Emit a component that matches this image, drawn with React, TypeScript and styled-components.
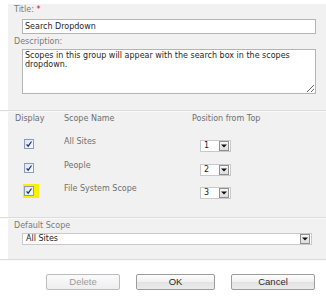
import { FC, Fragment } from "react";
import styled, { createGlobalStyle } from "styled-components";

const GlobalStyle = createGlobalStyle`
  html, body {
    margin: 0;
    padding: 0;
    background: #ffffff;
  }
  body {
    font-family: "DejaVu Sans", Verdana, sans-serif;
    font-size: 8px;
  }
`;

const Page = styled.div`
  width: 326px;
  height: 298px;
  padding-top: 4px;
  box-sizing: border-box;
  overflow: hidden;
`;

const Section = styled.div<{ $pt: number; $pb: number }>`
  margin-left: 8px;
  background: #f1f1f1;
  padding: ${(p) => p.$pt}px 10px ${(p) => p.$pb}px 6px;
  display: flex;
  flex-direction: column;
`;

const Divider = styled.div`
  height: 1px;
  background: #dcdcdc;
  border-bottom: 1px solid #fafafa;
`;

const Label = styled.div<{ $mt?: number }>`
  color: #7a7a7a;
  line-height: 10px;
  margin-top: ${(p) => p.$mt ?? 0}px;
`;

const Required = styled.span`
  color: #e0003a;
`;

const TextInput = styled.input`
  margin: 4px 0 0 8px;
  height: 15px;
  box-sizing: border-box;
  border: 1px solid #b5b5b5;
  background: #ffffff;
  padding: 0 2px;
  font-family: "DejaVu Sans", Verdana, sans-serif;
  font-size: 8px;
  color: #1f1f1f;
  outline: none;
`;

const TextArea = styled.textarea`
  margin: 2px 0 0 8px;
  height: 45px;
  box-sizing: border-box;
  border: 1px solid #b5b5b5;
  background: #ffffff;
  padding: 1px 2px;
  font-family: "DejaVu Sans", Verdana, sans-serif;
  font-size: 8px;
  line-height: 9px;
  color: #1f1f1f;
  outline: none;
  resize: both;
`;

const ScopeGrid = styled.div`
  display: grid;
  grid-template-columns: 49px 128px 1fr;
  grid-template-rows: 23px repeat(3, 23.5px);
  align-items: start;
  padding-left: 1px;
`;

const HeaderCell = styled.div`
  color: #6f6f6f;
  line-height: 10px;
`;

const ScopeName = styled.div`
  color: #6f6f6f;
  line-height: 10px;
`;

const CheckCell = styled.div`
  padding: 2px 0 0 9px;
`;

const CheckWrap = styled.span<{ $highlight?: boolean }>`
  display: inline-flex;
  padding: 2px 5px 2px 1px;
  margin: -2px 0 0 -1px;
  background: ${(p) => (p.$highlight ? "#f6f200" : "transparent")};
`;

const CheckBox = styled.span`
  width: 10px;
  height: 10px;
  box-sizing: border-box;
  border: 1px solid #8b9cb8;
  background: linear-gradient(135deg, #dfe6f2, #f8faff);
  display: inline-flex;
  align-items: center;
  justify-content: center;
`;

const SelectCell = styled.div`
  padding: 3px 0 0 8px;
`;

const SelectBox = styled.div<{ $width: number }>`
  width: ${(p) => p.$width}px;
  height: 12px;
  box-sizing: border-box;
  border: 1px solid #c9c9c9;
  background: #ffffff;
  display: flex;
  align-items: center;
  justify-content: space-between;
  padding: 0 1px 0 3px;
  color: #222222;
  line-height: 10px;
`;

const SelectArrow = styled.span`
  width: 10px;
  height: 10px;
  box-sizing: border-box;
  border: 1px solid #8f8f8f;
  background: linear-gradient(#f7f7f7, #dcdcdc);
  display: inline-flex;
  align-items: center;
  justify-content: center;
`;

const DefaultSelect = styled.div`
  margin: 2px 0 0 8px;
`;

const ButtonRow = styled.div`
  display: flex;
  justify-content: flex-end;
  gap: 16px;
  padding: 13px 11px 0 0;
`;

const Button = styled.button<{ $width: number }>`
  width: ${(p) => p.$width}px;
  height: 16px;
  box-sizing: border-box;
  border: 1px solid #9c9c9c;
  border-radius: 2px;
  background: linear-gradient(#fdfdfd 0%, #f0f0f0 50%, #e2e2e2 51%, #ebebeb 100%);
  font-family: "Liberation Sans", Arial, sans-serif;
  font-size: 9.5px;
  color: #2a2a2a;
  padding: 0;
  &:disabled {
    color: #9a9a9a;
    border-color: #bcbcbc;
    background: linear-gradient(#fbfbfb, #eeeeee);
  }
`;

const Arrow: FC = () => (
  <svg width="6" height="4" viewBox="0 0 6 4">
    <path d="M0 0.5 H6 L3 3.5 Z" fill="#111" />
  </svg>
);

const Check: FC = () => (
  <svg width="8" height="8" viewBox="0 0 8 8">
    <path
      d="M1.6 4.3 L3.2 6.2 L6.5 1.5"
      fill="none"
      stroke="#1b2d7a"
      strokeWidth="1.2"
    />
  </svg>
);

const Select: FC<{ value: string; width: number }> = ({ value, width }) => (
  <SelectBox $width={width}>
    <span>{value}</span>
    <SelectArrow>
      <Arrow />
    </SelectArrow>
  </SelectBox>
);

const scopes = [
  { name: "All Sites", pos: "1" },
  { name: "People", pos: "2" },
  { name: "File System Scope", pos: "3", highlight: true },
];

const App: FC = () => {
  return (
    <Page>
      <GlobalStyle />
      <Section $pt={1} $pb={16}>
        <Label>
          Title: <Required>*</Required>
        </Label>
        <TextInput readOnly value="Search Dropdown" />
        <Label $mt={3}>Description:</Label>
        <TextArea
          readOnly
          value="Scopes in this group will appear with the search box in the scopes dropdown."
        />
      </Section>
      <Divider />
      <Section $pt={2} $pb={9}>
        <ScopeGrid>
          <HeaderCell>Display</HeaderCell>
          <HeaderCell>Scope Name</HeaderCell>
          <HeaderCell>Position from Top</HeaderCell>
          {scopes.map((s) => (
            <Fragment key={s.name}>
              <CheckCell>
                <CheckWrap $highlight={s.highlight}>
                  <CheckBox>
                    <Check />
                  </CheckBox>
                </CheckWrap>
              </CheckCell>
              <ScopeName>{s.name}</ScopeName>
              <SelectCell>
                <Select value={s.pos} width={31} />
              </SelectCell>
            </Fragment>
          ))}
        </ScopeGrid>
      </Section>
      <Divider />
      <Section $pt={2} $pb={14}>
        <Label>Default Scope</Label>
        <DefaultSelect>
          <Select value="All Sites" width={290} />
        </DefaultSelect>
      </Section>
      <Divider />
      <ButtonRow>
        <Button $width={74} disabled>
          Delete
        </Button>
        <Button $width={79}>OK</Button>
        <Button $width={84}>Cancel</Button>
      </ButtonRow>
    </Page>
  );
};

export default App;
